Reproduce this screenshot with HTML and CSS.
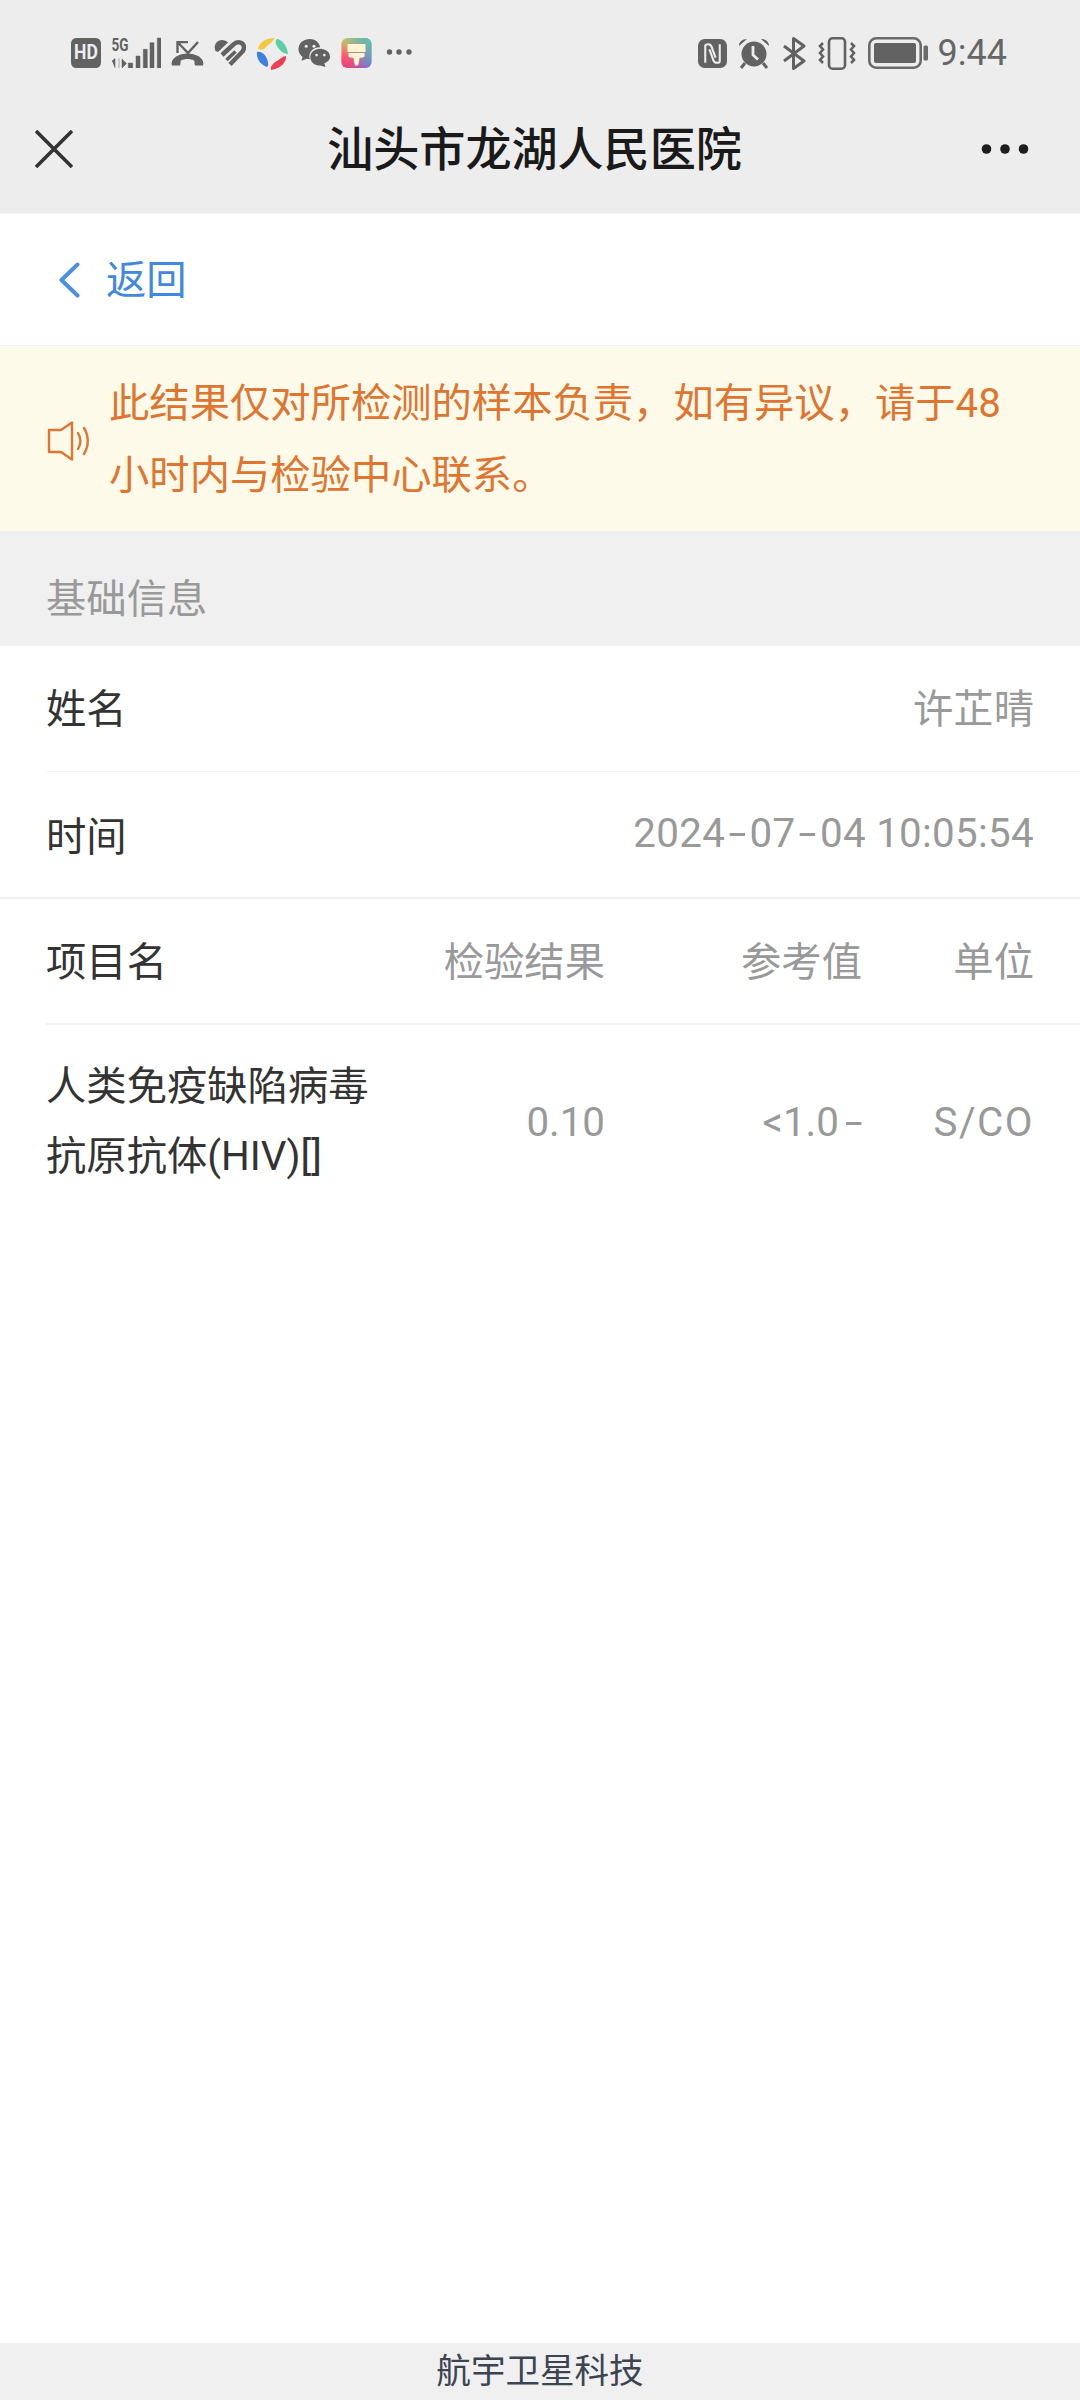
FILE: index.html
```html
<!DOCTYPE html>
<html lang="zh-CN">
<head>
<meta charset="utf-8">
<title>汕头市龙湖人民医院</title>
<link rel="stylesheet" href="styles.css">
</head>
<body>
<div class="page">
  <header class="top">
    <div class="status">
      <div class="status-group status-left">
        <svg class="ic" width="30" height="30" viewBox="0 0 29 29"><rect width="29" height="29" rx="5" fill="#626262"/><text x="14.500" y="20.500" text-anchor="middle" class="hd" textLength="23" lengthAdjust="spacingAndGlyphs">HD</text></svg>
        <svg class="ic ic-signal" width="50" height="36" viewBox="0 -6 50 36"><text x="0.500" y="13" class="sg" textLength="17" lengthAdjust="spacingAndGlyphs">5G</text><path d="M1 23l3-2.500V30M8 20.500V30M11 21l4.500 4.500L11 30zM17.300 25h4.400v5h-4.400zM25 18h4v12h-4zM32.300 11.300h4V30h-4zM39 4.700h4V30h-4zM46.300 0H50v30h-3.700z" fill="#626262" stroke="#626262" stroke-width=".5"/></svg>
        <svg class="ic" width="33" height="25" viewBox="0 0 33 25"><path d="M17 1H6.500v11M6.500 1L17 12 27 1" fill="none" stroke="#626262" stroke-width="2.400"/><path d="M1 24.500c-1-3 0-6 4-9 7-4 16-4 23 0 4 3 5 6 4 9h-8c-1-2 0-4-1-5-4-2-9-2-13 0-1 1 0 3-1 5z" fill="#626262"/></svg>
        <svg class="ic" width="32" height="28" viewBox="0 0 32 28"><path d="M1.500 12C-1 6 3 1 8 1c2.500 0 4.500 1 6 2.500L4 13z" fill="#626262"/><path d="M8 16L20 5c4-3 10-2 10 3.500 0 2-1 3.500-2 4.500L16 25.500" fill="none" stroke="#626262" stroke-width="4.500"/><path d="M12.500 21L21.500 12.500" fill="none" stroke="#626262" stroke-width="3.500"/></svg>
        <svg class="ic" width="32" height="33" viewBox="0 0 32 33"><path d="M2 12C3 6 9 1 18 1c0 4-6 6-8 9-2 3-5 3-8 2z" fill="#f4c83e"/><path d="M22 2c5 2 9 7 10 15-5 0-10-5-12-10-1-3 0-5 2-5z" fill="#5dd0a2"/><path d="M1 15c4-1 8 2 10 7 1 3 2 6 0 8-6-2-11-8-10-15z" fill="#3f7fe0"/><path d="M30 19c1 6-6 13-15 14-1-3 2-7 6-9 3-2 6-5 9-5z" fill="#ef3e55"/></svg>
        <svg class="ic" width="33" height="28" viewBox="0 0 31 27"><path d="M11 0C5 0 0 4 0 10c0 3 2 6 4 7l-1 4 5-2c1 0 2 .5 3 .5C9 14 13 8 21 8c-1-5-5-8-10-8z" fill="#626262"/><path d="M21 9.500c-5.500 0-9.500 3.500-9.500 8s4 8 9.500 8l5 1.500-1-3.500c3-1.500 5.500-3.500 5.500-6 0-4.500-4-8-9.500-8z" fill="#626262"/><circle cx="7.500" cy="7" r="1.500" fill="#ededed"/><circle cx="15" cy="7" r="1.500" fill="#ededed"/><circle cx="17.500" cy="15.500" r="1.300" fill="#ededed"/><circle cx="25" cy="15.500" r="1.300" fill="#ededed"/></svg>
        <svg class="ic" width="31" height="30" viewBox="0 0 30 30"><defs><linearGradient id="paintBase" x1="0" y1="0" x2="1" y2="1"><stop offset="0" stop-color="#f7cf3c"/><stop offset=".45" stop-color="#f3707c"/><stop offset="1" stop-color="#6a5cf0"/></linearGradient><linearGradient id="paintTeal" x1="1" y1="0" x2="0.300" y2="0.700"><stop offset="0" stop-color="#3fd0b8"/><stop offset="1" stop-color="#3fd0b8" stop-opacity="0"/></linearGradient><linearGradient id="paintPink" x1="0" y1="1" x2="0.500" y2="0.500"><stop offset="0" stop-color="#f4366f"/><stop offset="1" stop-color="#f4366f" stop-opacity="0"/></linearGradient></defs><rect width="30" height="30" rx="6" fill="url(#paintBase)"/><rect width="30" height="30" rx="6" fill="url(#paintPink)"/><rect width="30" height="30" rx="6" fill="url(#paintTeal)"/><path d="M6 6h18v8H6zM7 15h16v3c0 1.500-3 1.500-5 2l-1 6c0 2-4 2-4 0l-1-6c-2-.5-5-.5-5-2z" fill="#fdf4d2"/></svg>
        <svg class="ic" width="30" height="8" viewBox="0 0 30 8"><circle cx="7.500" cy="3" r="2.700" fill="#636363"/><circle cx="17" cy="3" r="2.700" fill="#636363"/><circle cx="27" cy="3" r="2.700" fill="#636363"/></svg>
      </div>
      <div class="status-group status-right">
        <svg class="ic" width="29" height="29" viewBox="0 0 28 28"><rect width="28" height="28" rx="6.500" fill="#626262"/><path d="M7 23V6.500c0-1 1-1.500 3-1.500 3 0 3 2 4 5l3 8M21 5v16.500c0 1-1 1.500-3 1.500-3 0-3-2-4-5l-3-8" fill="none" stroke="#ededed" stroke-width="2"/></svg>
        <svg class="ic" width="32" height="31" viewBox="0 0 32 31"><circle cx="16" cy="16" r="12.500" fill="#626262"/><path d="M1 8c0-4 3-7 8-7zM31 8c0-4-3-7-8-7z" fill="#626262"/><path d="M7 25l-4 5M25 25l4 5" stroke="#626262" stroke-width="3" fill="none"/><path d="M15 8v9l5 4.500" stroke="#ededed" stroke-width="2.800" fill="none"/></svg>
        <svg class="ic" width="26" height="33" viewBox="0 0 26 33"><path d="M3 9l20 15-10.500 7.500V1.500L23 9 3 24" fill="none" stroke="#626262" stroke-width="3" stroke-linejoin="round"/></svg>
        <svg class="ic" width="39" height="33" viewBox="0 0 39 33"><rect x="11" y="1.300" width="16" height="30.400" rx="3.500" fill="none" stroke="#626262" stroke-width="2.600"/><path d="M5 6L2 9l3 3.500L2 16l3 3.500L2 23l3 3M33 6l3 3-3 3.500 3 3.500-3 3.500 3 3.500-3 3" fill="none" stroke="#626262" stroke-width="2.600"/></svg>
        <svg class="ic" width="60" height="32" viewBox="0 0 60 32"><rect x="1.300" y="1.300" width="51.400" height="29.400" rx="7" fill="none" stroke="#6a6a6a" stroke-width="2.600"/><rect x="6" y="6" width="42" height="20" rx="2" fill="#626262"/><rect x="55.500" y="8.500" width="4.500" height="15" rx="1.500" fill="#6a6a6a"/></svg>
        <span class="clock">9:44</span>
      </div>
    </div>
    <nav class="nav">
      <svg class="nav-close" width="38" height="38" viewBox="0 0 38 38"><path d="M1 1l36 36M37 1L1 37" stroke="#333" stroke-width="3.600" fill="none"/></svg>
      <h1 class="nav-title">汕头市龙湖人民医院</h1>
      <svg class="nav-more" width="48" height="12" viewBox="0 0 48 12"><circle cx="5.500" cy="6" r="4.800" fill="#1d1d1d"/><circle cx="24" cy="6" r="4.800" fill="#1d1d1d"/><circle cx="42.500" cy="6" r="4.800" fill="#1d1d1d"/></svg>
    </nav>
  </header>

  <div class="back">
    <svg width="22" height="36" viewBox="0 0 22 36"><path d="M19.500 2.500L3.500 18l16 15.500" fill="none" stroke="#4a8fe0" stroke-width="4" stroke-linecap="round" stroke-linejoin="round"/></svg>
    <span class="back-text">返回</span>
  </div>

  <div class="notice">
    <svg class="notice-icon" width="44" height="40" viewBox="0 0 44 40"><path d="M2 9h12L25 1.500v37L14 31H2z" fill="none" stroke="#de7530" stroke-width="2.400" stroke-linejoin="round"/><path d="M31 12c3 5 3 11 0 16M37 7c5 8 5 18 0 26" fill="none" stroke="#de7530" stroke-width="2.400" stroke-linecap="round"/></svg>
    <p class="notice-text">此结果仅对所检测的样本负责，如有异议，请于48小时内与检验中心联系。</p>
  </div>

  <div class="section-title">基础信息</div>

  <main class="content">
    <div class="row row-inset">
      <span class="label">姓名</span>
      <span class="value">许芷晴</span>
    </div>
    <div class="row row-full">
      <span class="label">时间</span>
      <span class="value date">2024<span class="dash">-</span>07<span class="dash">-</span>04 10:05:54</span>
    </div>
    <div class="grid grid-head">
      <span class="label">项目名</span>
      <span class="value">检验结果</span>
      <span class="value">参考值</span>
      <span class="value">单位</span>
    </div>
    <div class="grid grid-item">
      <span class="label item-name">人类免疫缺陷病毒抗原抗体(HIV)[]</span>
      <span class="value">0.10</span>
      <span class="value">&lt;1.0<span class="dash dash-end">-</span></span>
      <span class="value unit">S/CO</span>
    </div>
  </main>

  <footer class="foot">航宇卫星科技</footer>
</div>
</body>
</html>
```
FILE: styles.css
```css
* { box-sizing: border-box; margin: 0; padding: 0; }
html, body { height: 100%; }
body {
  background: #fff;
  font-family: "Roboto", "Noto Sans CJK SC", sans-serif;
  font-size: 40.32px;
  color: #333;
}
.page { display: flex; flex-direction: column; height: 2400px; }

.top { background: #ededed; height: 214px; border-bottom: 1px solid #f4f4f4; }
.status {
  height: 84px;
  padding: 22px 73px 0 71px;
  display: flex;
  justify-content: space-between;
  align-items: center;
}
.status-group { display: flex; align-items: center; }
.status-left { gap: 10px; }
.status-right { gap: 11px; }
.ic { display: block; flex: none; }
.ic-signal { margin-top: -6px; }
.hd { font: 700 19px "Roboto", sans-serif; fill: #ededed; }
.sg { font: 700 18px "Roboto", sans-serif; fill: #626262; }
.clock { font-size: 36px; color: #666; line-height: 40px; margin-left: -1px; }

.nav { height: 129px; display: flex; align-items: center; padding: 0 51px 0 35px; }
.nav-title {
  flex: 1;
  padding: 0 0 5px 15px;
  font-size: 46.08px;
  font-weight: 500;
  color: #1a1a1a;
  text-align: center;
}
.nav-close, .nav-more { display: block; flex: none; }

.back {
  height: 132px;
  display: flex;
  align-items: center;
  gap: 26px;
  padding-left: 58px;
  border-bottom: 1px solid #f0f0f0;
}
.back-text { color: #4088e0; margin-bottom: 6px; }

.notice {
  display: flex;
  align-items: center;
  gap: 18px;
  height: 185px;
  padding: 3px 50px 0 47px;
  background: #fefaea;
}
.notice-icon { flex: none; display: block; margin-top: 2px; }
.notice-text { color: #de7530; line-height: 72px; }

.section-title {
  height: 115px;
  padding: 39px 46px 0;
  background: #f0f0f0;
  color: #999;
  line-height: 60px;
}

.content { flex: 1; }
.row {
  height: 126px;
  display: flex;
  justify-content: space-between;
  align-items: center;
  padding: 0 46px 8px;
}
.row-inset { position: relative; }
.row-inset::after {
  content: "";
  position: absolute;
  left: 46px;
  right: 0;
  bottom: 0;
  height: 1px;
  background: #f2f2f2;
}
.row-full { height: 127px; padding-bottom: 3px; border-bottom: 2px solid #f0f0f0; }
.label { color: #333; }
.value { color: #999; text-align: right; }
.date { letter-spacing: .3px; }
.dash { display: inline-block; margin: 0 6.500px; transform: scaleX(1.6); }
.dash-end { margin: 0 3px 0 9px; }
.unit { letter-spacing: 1.5px; }

.grid {
  display: grid;
  align-items: center;
  margin-left: 46px;
  width: 988px;
  grid-template-columns: 330px 229px 257px 172px;
}
.grid-head {
  height: 126px;
  padding-bottom: 5px;
  border-bottom: 2px solid #f2f2f2;
  width: 1034px;
  grid-template-columns: 330px 229px 257px 172px 46px;
}
.grid-item { padding-top: 27px; }
.item-name { line-height: 70px; }

.foot {
  height: 57px;
  background: #f0f0f0;
  color: #3c4450;
  font-size: 34.56px;
  line-height: 56px;
  text-align: center;
}
```
